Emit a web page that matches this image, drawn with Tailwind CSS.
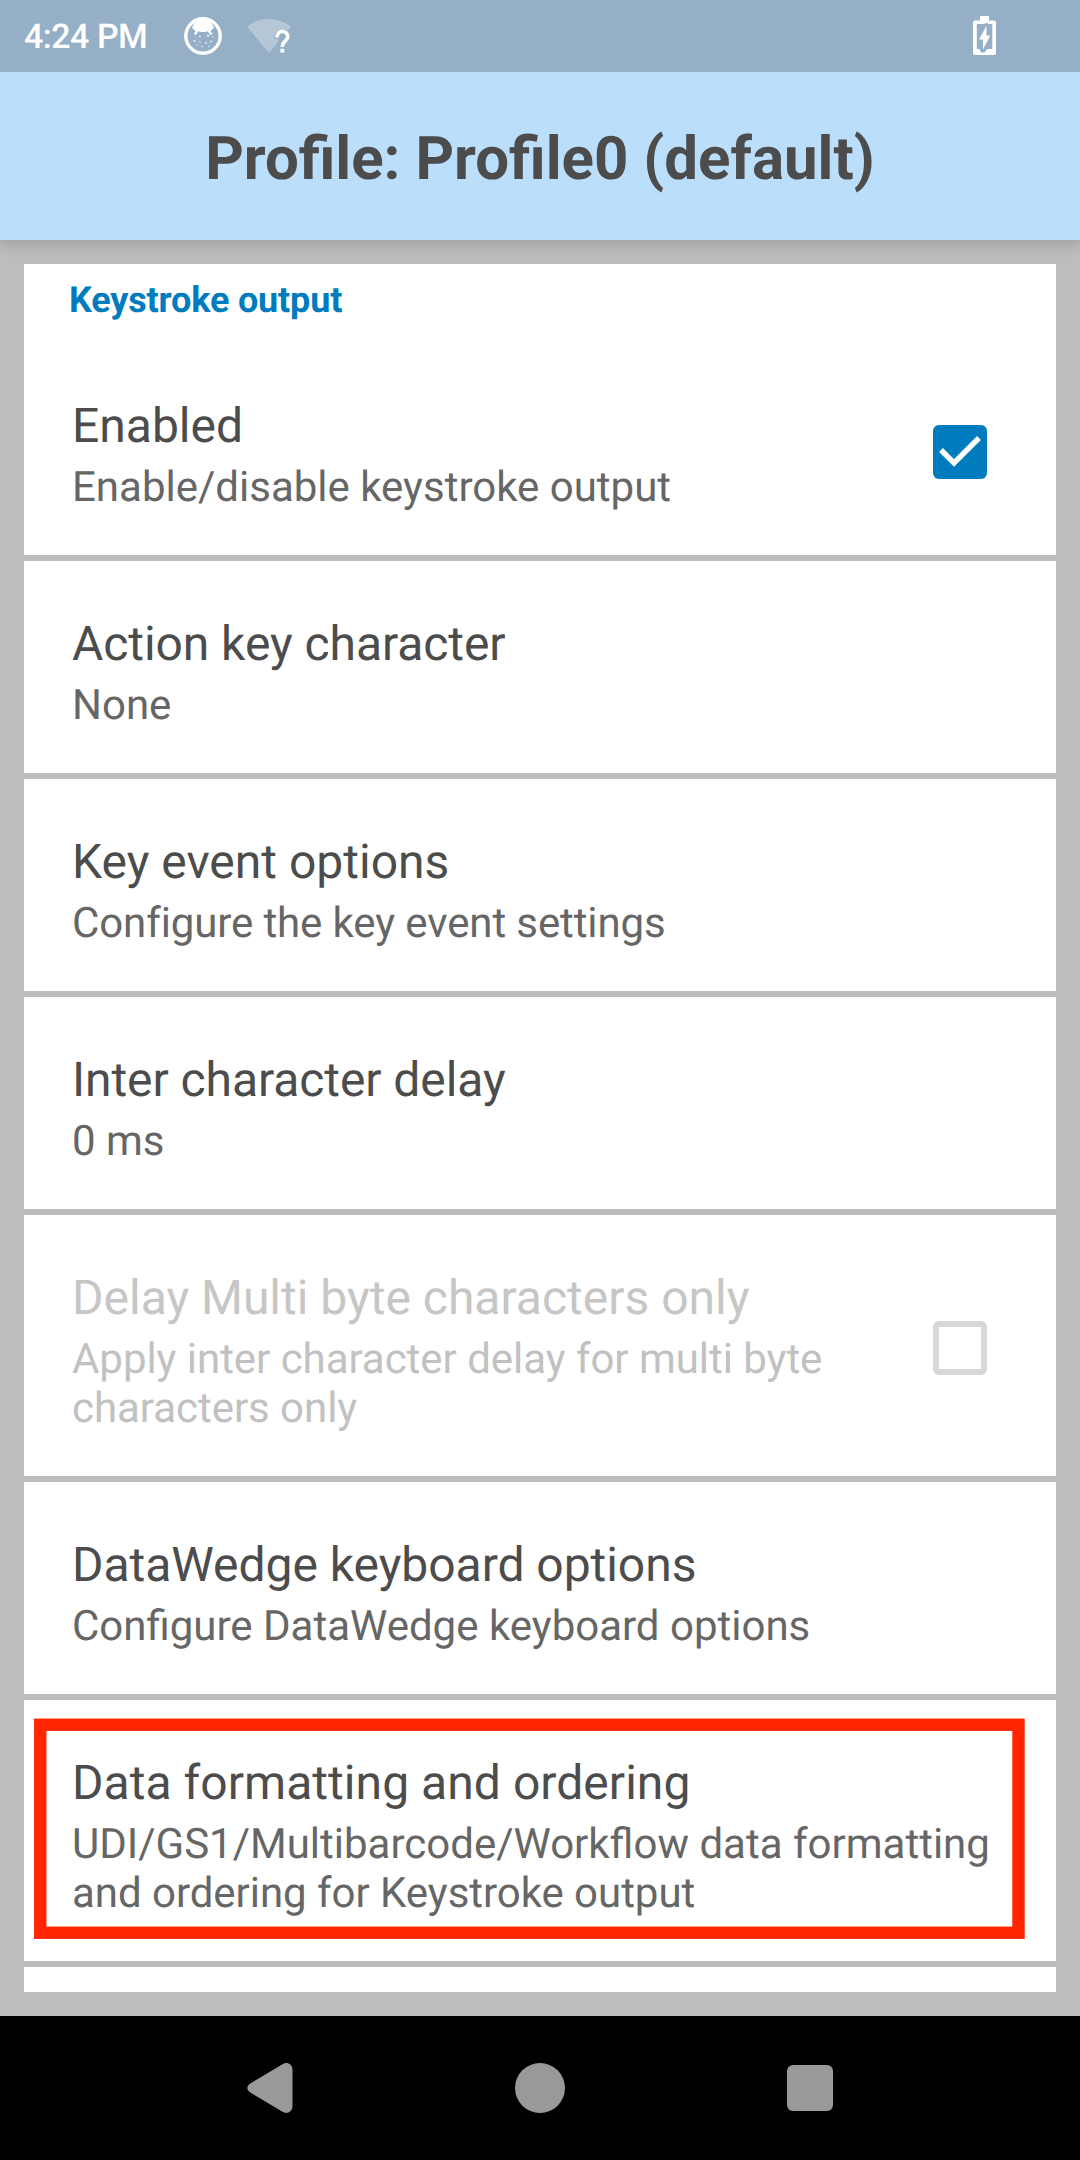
<!DOCTYPE html>
<html lang="en">
<head>
<meta charset="utf-8">
<title>Profile: Profile0 (default)</title>
<script src="https://cdn.jsdelivr.net/npm/@tailwindcss/browser@4"></script>
</head>
<body class="w-[1080px] h-[2160px] overflow-hidden bg-[#bdbdbd] font-[Roboto,sans-serif] [text-rendering:geometricPrecision] text-[#4c4c4c] flex flex-col">
  <div class="h-[72px] shrink-0 bg-[#95afc6] flex items-center pl-6 text-white">
    <span class="text-[34px] leading-10 pt-0.5 font-medium whitespace-nowrap w-[160px] tracking-[-0.5px]">4:24 PM</span>
    <svg class="w-[38px] h-[38px]" viewBox="0 0 38 38">
      <circle cx="19" cy="19" r="17.200" fill="none" stroke="#fff" stroke-width="3.400"/>
      <path d="M8 11 C10 4 15 3 19 3 S28 4 30 11 L26 12 Q25 14 23 14.500 Q19 15.500 15 14.500 Q13 14 12 12 Z" fill="#fff"/>
      <path d="M9 10L13 14L11 17.500M29 10L25 14L27.500 17.500" fill="none" stroke="#fff" stroke-width="2.400"/>
      <g fill="#fff" opacity=".75"><circle cx="10.500" cy="24" r="1.100"/><circle cx="16" cy="19.500" r=".9"/><circle cx="24" cy="18.500" r="1.200"/><circle cx="29" cy="20" r=".8"/><circle cx="22" cy="26" r="1.100"/><circle cx="16" cy="25" r=".8"/><circle cx="27" cy="24.500" r=".9"/><circle cx="13" cy="28" r=".7"/><circle cx="18" cy="29.500" r=".8"/><circle cx="25" cy="29.500" r=".7"/></g>
    </svg>
    <svg class="ml-[25px] w-[46px] h-[38px]" viewBox="0 0 46 38">
      <path d="M0 9.500 C13 -.5 31 -.5 44 9.500 L41 13.500 C34 11 27 15 27 22 H32 L29 28 L22 36 Z" fill="#fff" opacity=".3"/>
      <path d="M30 20.500 C30 12.500 40.800 13 40.800 19.500 C40.800 24 35.300 24 35.300 30" fill="none" stroke="#fff" stroke-width="3.600"/>
      <rect x="33.400" y="31.800" width="3.800" height="3.800" fill="#fff"/>
    </svg>
    <svg class="ml-auto mr-[84px] w-[23px] h-[40px]" viewBox="0 0 23 40">
      <path fill-rule="evenodd" d="M7 0H16V4.500H21Q23 4.500 23 6.500V37Q23 39 21 39H2Q0 39 0 37V6.500Q0 4.500 2 4.500H7ZM3.800 8V33H6.500L8 36.500H11.500L14 33H19.300V8H15.500L14 6.800L11 8Z" fill="#fff"/>
      <path d="M13.500 10V19.500H17.200L10 33.500V23.500H6Z" fill="#fff"/>
    </svg>
  </div>

  <header class="h-[168px] shrink-0 bg-[#bbdefb] relative flex items-center justify-center pt-[5px] shadow-[0_5px_14px_rgba(0,0,0,0.16)] [clip-path:inset(0_0_-30px_0)]">
    <h1 class="text-[60px] leading-[70px] font-bold whitespace-nowrap">Profile: Profile0 (default)</h1>
  </header>

  <main class="mt-6 mx-6 h-[1728px] shrink-0 flex flex-col gap-1.5 relative">
    <section class="bg-white">
      <h2 class="h-[79px] pt-[15px] pl-[45px] text-[36px] leading-[42px] font-bold tracking-[-0.17px] text-[#007cbe]">Keystroke output</h2>
      <div class="h-[212px] pt-[55px] pl-12 relative">
        <div class="text-[48px] leading-[56px]">Enabled</div>
        <div class="mt-[9px] text-[42px] leading-[49px] text-[#666]">Enable/disable keystroke output</div>
        <svg class="absolute left-[909px] top-[82px] w-[54px] h-[54px]" viewBox="0 0 54 54"><rect width="54" height="54" rx="6" fill="#007cbe"/><path d="M8 25L21 38L46 13" fill="none" stroke="#fff" stroke-width="5.400"/></svg>
      </div>
    </section>
    <section class="bg-white h-[212px] pt-[55px] pl-12">
      <div class="text-[48px] leading-[56px] tracking-[-0.07px]">Action key character</div>
      <div class="mt-[9px] text-[42px] leading-[49px] text-[#666]">None</div>
    </section>
    <section class="bg-white h-[212px] pt-[55px] pl-12">
      <div class="text-[48px] leading-[56px]">Key event options</div>
      <div class="mt-[9px] text-[42px] leading-[49px] tracking-[-0.11px] [font-variant-ligatures:common-ligatures] text-[#666]">Configure the key event settings</div>
    </section>
    <section class="bg-white h-[212px] pt-[55px] pl-12">
      <div class="text-[48px] leading-[56px] tracking-[-0.07px]">Inter character delay</div>
      <div class="mt-[9px] text-[42px] leading-[49px] text-[#666]">0 ms</div>
    </section>
    <section class="bg-white h-[261px] pt-[55px] pl-12 relative">
      <div class="text-[48px] leading-[56px] text-[#c6c6c6]">Delay Multi byte characters only</div>
      <div class="mt-[9px] text-[42px] leading-[49px] tracking-[-0.04px] text-[#c1c1c1]">Apply inter character delay for multi byte<br>characters only</div>
      <div class="absolute left-[909px] top-[106px] size-[54px] rounded-md border-6 border-[#d7d7d7]"></div>
    </section>
    <section class="bg-white h-[212px] pt-[55px] pl-12">
      <div class="text-[48px] leading-[56px] tracking-[-0.04px]">DataWedge keyboard options</div>
      <div class="mt-[9px] text-[42px] leading-[49px] text-[#666]">Configure DataWedge keyboard options</div>
    </section>
    <section class="bg-white h-[261px] pt-[55px] pl-12 relative">
      <div class="text-[48px] leading-[56px] tracking-[0.05px]">Data formatting and ordering</div>
      <div class="mt-[9px] text-[42px] leading-[49px] text-[#666] whitespace-nowrap">UDI/GS1/Multibarcode/Workflow data formatting<br><span class="tracking-[-0.04px]">and ordering for Keystroke output</span></div>
      <svg class="absolute left-[10px] top-[18px] w-[991px] h-[222px]" viewBox="0 0 991 222"><rect x="6.250" y="6.750" width="978.250" height="208" fill="none" stroke="#ff2600" stroke-width="12.400"/></svg>
    </section>
    <section class="bg-white h-[25px]"></section>
  </main>

  <nav class="mt-auto h-[144px] shrink-0 bg-black flex items-center justify-between pl-[247px] pr-[247px]">
    <svg class="w-[46px] h-[50px]" viewBox="0 0 46 50" fill="#999"><path d="M2.500 21L35.500 1.200C40-1.500 45.500 1 45.500 7V43C45.500 49 40 51.500 35.500 48.800L2.500 29Q-2 25 2.500 21Z"/></svg>
    <div class="size-[50px] rounded-full bg-[#999]"></div>
    <div class="size-[46px] rounded-md bg-[#999]"></div>
  </nav>
</body>
</html>
